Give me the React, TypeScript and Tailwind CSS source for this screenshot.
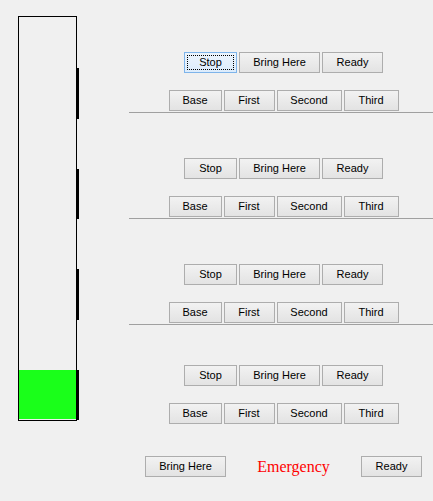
import React from "react";

const topButtons = [
  { label: "Stop", w: "w-[53px]" },
  { label: "Bring Here", w: "w-[81px]" },
  { label: "Ready", w: "w-[61px]" },
];

const floorButtons = [
  { label: "Base", w: "w-[53px]" },
  { label: "First", w: "w-[51px]" },
  { label: "Second", w: "w-[65px]" },
  { label: "Third", w: "w-[55px]" },
];

const WinButton = ({ label, w, focused }: { label: string; w: string; focused?: boolean }) => {
  if (focused) {
    return (
      <button className={`${w} h-[21px] border border-[#7eb4ea] bg-gradient-to-b from-[#ecf4fc] to-[#dcecfc] p-[2px] text-[11px] text-black`}>
        <span className="flex h-full w-full items-center justify-center border border-dotted border-black">{label}</span>
      </button>
    );
  }
  return (
    <button className={`${w} h-[21px] border border-[#adadad] bg-gradient-to-b from-[#f2f2f2] to-[#e3e3e3] text-[11px] text-black`}>
      {label}
    </button>
  );
};

const Section = ({ first, line }: { first?: boolean; line?: boolean }) => (
  <div className="flex flex-col">
    <div className="flex justify-center gap-[2px] pl-[5px]">
      {topButtons.map((b, i) => (
        <WinButton key={b.label} label={b.label} w={b.w} focused={first && i === 0} />
      ))}
    </div>
    <div className="mt-[17px] flex justify-center gap-[2px] pl-[5px]">
      {floorButtons.map((b) => (
        <WinButton key={b.label} label={b.label} w={b.w} />
      ))}
    </div>
    {line && <div className="mt-px h-px bg-[#a0a0a0]" />}
  </div>
);

const Marker = () => <div className="mr-[-3px] ml-auto h-[51px] w-[3px] bg-black" />;

export default function App() {
  return (
    <div
      className="flex h-[501px] w-[433px] items-start overflow-hidden bg-[#f0f0f0]"
      style={{ fontFamily: '"Liberation Sans", Arial, sans-serif' }}
    >
      {/* shaft */}
      <div className="ml-[18px] mt-[16px] flex h-[405px] w-[59px] flex-col border border-black">
        <div className="h-[51px]" />
        <Marker />
        <div className="h-[50px]" />
        <Marker />
        <div className="h-[50px]" />
        <Marker />
        <div className="h-[50px]" />
        <div className="mr-[-3px] flex h-[50px]">
          <div className="h-[49px] flex-1 bg-[#1aff1a]" />
          <div className="h-[50px] w-[3px] bg-black" />
        </div>
      </div>

      {/* controls */}
      <div className="ml-[52px] flex flex-1 flex-col pt-[52px]">
        <Section first line />
        <div className="mt-[45px]">
          <Section line />
        </div>
        <div className="mt-[45px]">
          <Section line />
        </div>
        <div className="mt-[40px]">
          <Section />
        </div>
        <div className="mt-[32px] flex h-[21px] items-center justify-between pl-[16px] pr-[11px]">
          <WinButton label="Bring Here" w="w-[81px]" />
          <span
            className="text-[16px] leading-none text-[#ff0000]"
            style={{ fontFamily: '"Liberation Serif", "Times New Roman", serif' }}
          >
            Emergency
          </span>
          <WinButton label="Ready" w="w-[61px]" />
        </div>
      </div>
    </div>
  );
}
